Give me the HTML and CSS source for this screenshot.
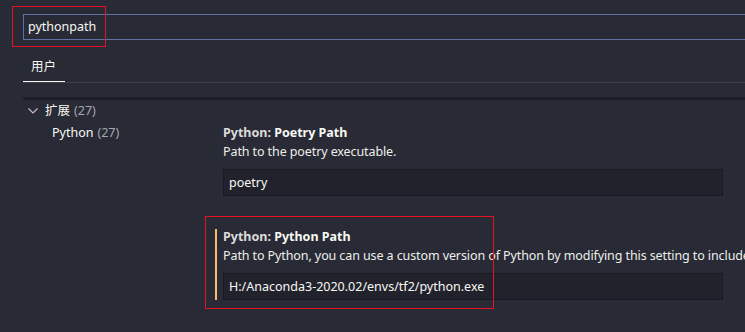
FILE: index.html
```html
<!DOCTYPE html>
<html>
  <head>
    <meta charset="UTF-8">
    <title>设置</title>
    <link rel="stylesheet" href="styles.css">
  </head>
  <body>
    <div class="header">
      <div class="search">pythonpath</div>
      <div class="tabs">
        <div class="tab active">用户</div>
      </div>
    </div>

    <div class="body">
      <div class="toc">
        <div class="toc-row group">
          <svg class="chevron" width="10" height="6" viewBox="0 0 10 6"><path d="M0.5 0.5 L5 5 L9.5 0.5" fill="none" stroke="#c5c5c5" stroke-width="1.1"/></svg>
          扩展 <span class="count">(27)</span>
        </div>
        <div class="toc-row sub">Python <span class="count">(27)</span></div>
      </div>

      <div class="settings">
        <div class="setting">
          <div class="title"><span class="cat">Python: </span>Poetry Path</div>
          <div class="desc">Path to the poetry executable.</div>
          <div class="field">poetry</div>
        </div>
        <div class="setting modified">
          <div class="title"><span class="cat">Python: </span>Python Path</div>
          <div class="desc">Path to Python, you can use a custom version of Python by modifying this setting to include</div>
          <div class="field">H:/Anaconda3-2020.02/envs/tf2/python.exe</div>
        </div>
      </div>
    </div>

    <!-- red marks drawn over the screenshot -->
    <div class="mark mark1"></div>
    <div class="mark mark2"></div>
  </body>
</html>
```

FILE: styles.css
```css
html, body {
  margin: 0;
  height: 100%;
  overflow: hidden;
}

body {
  background-color: #282a36;
  color: #f8f8f2;
  font-family: "Noto Sans", "Noto Sans CJK SC", sans-serif;
  font-size: 12.5px;
  position: relative;
}

.header {
  padding: 14px 0 0 23px;
}

.search {
  height: 24px;
  line-height: 24px;
  border: 1px solid #6272a4;
  border-right: none;
  padding-left: 4px;
  color: #f8f8f2;
}

.tabs {
  display: flex;
  margin-top: 15px;
  border-bottom: 1px solid #3d3f4b;
}

.tab {
  padding: 0 8px;
  height: 27px;
  line-height: 24px;
}

.tab.active {
  box-shadow: inset 0 -1px 0 #f8f8f2;
  width: 26px;
}

.body {
  display: grid;
  grid-template-columns: 180px 1fr;
  margin-left: 23px;
  margin-top: 14px;
  border-top: 3px solid #1d1e26;
}

.toc-row {
  height: 22px;
  line-height: 20px;
  display: flex;
  align-items: center;
  white-space: nowrap;
}

.toc-row.group {
  padding-left: 5px;
}

.chevron {
  margin-right: 7px;
}

.toc-row.sub {
  padding-left: 29px;
}

.count {
  color: #a6a7ad;
  margin-left: 4px;
}

.settings {
  padding: 25px 0 0 12px;
  white-space: nowrap;
  overflow: hidden;
}

.setting {
  border-left: 2px solid transparent;
  padding-left: 6px;
  margin-bottom: 33px;
}

.setting.modified {
  border-left-color: #ffb86c;
}

.title {
  font-weight: 700;
  line-height: 15px;
}

.cat {
  color: #dcdcd8;
}

.desc {
  margin-top: 3px;
  line-height: 18px;
  color: #eeeee9;
  letter-spacing: -0.1px;
}

.field {
  margin-top: 8px;
  width: 493px;
  height: 25px;
  line-height: 25px;
  padding-left: 5px;
  background-color: #21222c;
  border: 1px solid #191a21;
}

.mark {
  position: absolute;
  border: 1px solid #e81123;
}

.mark1 {
  left: 12px;
  top: 6px;
  width: 92px;
  height: 39px;
}

.mark2 {
  left: 205px;
  top: 216px;
  width: 287px;
  height: 91px;
}
```
